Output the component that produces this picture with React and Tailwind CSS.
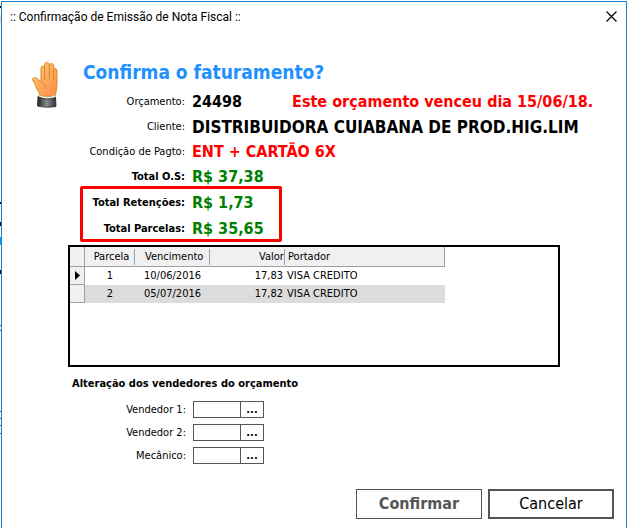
const orderRows = [
  { label: "Orçamento:", value: "24498", valueClass: "text-[16px] text-black", note: "Este orçamento venceu dia 15/06/18." },
  { label: "Cliente:", value: "DISTRIBUIDORA CUIABANA DE PROD.HIG.LIM", valueClass: "text-[17px] text-black" },
  { label: "Condição de Pagto:", value: "ENT + CARTÃO 6X", valueClass: "text-[16px] text-[#ff0000]" },
];

const retainedTotals = [
  { label: "Total Retenções:", value: "R$ 1,73" },
  { label: "Total Parcelas:", value: "R$ 35,65" },
];

const installments = [
  { number: 1, due: "10/06/2016", amount: "17,83", holder: "VISA CREDITO" },
  { number: 2, due: "05/07/2016", amount: "17,82", holder: "VISA CREDITO" },
];

const sellers = [
  { id: "vendedor1", label: "Vendedor 1:" },
  { id: "vendedor2", label: "Vendedor 2:" },
  { id: "mecanico", label: "Mecânico:" },
];

const HandIcon = () => (
  <svg viewBox="0 0 32 50" className="h-[50px] w-8" aria-hidden="true">
    <defs>
      <linearGradient id="skin" x1="0" y1="0" x2="1" y2="1">
        <stop offset="0" stopColor="#ffc777" />
        <stop offset="0.55" stopColor="#ffa95a" />
        <stop offset="1" stopColor="#ff8a4c" />
      </linearGradient>
      <linearGradient id="sleeve" x1="0" y1="0" x2="1" y2="0">
        <stop offset="0" stopColor="#222" />
        <stop offset="0.5" stopColor="#8a8a8a" />
        <stop offset="1" stopColor="#333" />
      </linearGradient>
    </defs>
    <path
      d="M10 36 C9.500 33 8.500 31 7 29 C5 26 5 22.500 2.500 20 C2.500 17.300 5 17.300 7 18.500 L11 22 L11 8.500 C11 5.500 14 5.500 14.300 8 L14.600 4.500 C15 1.500 19 1.500 19.200 4.500 L19.500 5.500 C20 2.600 23.600 3.200 23.700 6 L23.800 10 C24.300 7.500 27 8 27 11 L27 24 C27 29 25.500 32 25.500 36.500 Z"
      fill="url(#skin)"
      stroke="#d98a26"
      strokeWidth="1"
    />
    <path d="M14.500 8 V20 M19.300 5 V19 M23.700 9 V20" stroke="#d98a26" strokeWidth="1" fill="none" />
    <path d="M11 22 C14 23.500 15.500 26 15.500 29" stroke="#e8893c" strokeWidth="1" fill="none" />
    <path d="M8.500 34.500 C13 38 20 38 25 35 L25.500 39 C20 41 13 41 8 38 Z" fill="#f4f4f4" stroke="#bbb" strokeWidth="0.5" />
    <path d="M8 36.500 C13 39.500 20 39.500 25.500 37.500 L26 46.500 C20 47.500 13 47.500 7.500 46 Z" fill="url(#sleeve)" stroke="#222" strokeWidth="0.8" />
  </svg>
);

const Field = ({ label, value, labelClass = "", valueClass, height, children }) => (
  <div className={`flex items-center gap-[7px] ${height}`}>
    <dt className={`w-[183px] shrink-0 whitespace-nowrap text-right ${labelClass}`}>{label}</dt>
    <dd className={`whitespace-nowrap leading-5 font-bold ${valueClass}`}>
      {value}
      {children}
    </dd>
  </div>
);

const OrderSummary = () => (
  <dl className="mt-[5px]">
    {orderRows.map((row) => (
      <Field key={row.label} label={row.label} value={row.value} valueClass={row.valueClass} height="h-[25px]">
        {row.note && <span className="ml-[50px] text-[#ff0000]">{row.note}</span>}
      </Field>
    ))}
    <Field
      label="Total O.S:"
      value="R$ 37,38"
      labelClass="font-bold"
      valueClass="text-[16px] text-[#008000]"
      height="h-[26px]"
    />
    <div className="relative">
      {retainedTotals.map((row) => (
        <Field
          key={row.label}
          label={row.label}
          value={row.value}
          labelClass="font-bold"
          valueClass="text-[16px] text-[#008000]"
          height="h-[26px]"
        />
      ))}
      <div className="pointer-events-none absolute -top-1 bottom-0 left-[78px] w-[202px] rounded-xs border-3 border-[#ff0000]" />
    </div>
  </dl>
);

const InstallmentTable = () => (
  <div className="mx-[66px] mt-[3px] h-[122px] border-2 border-black">
    <table className="w-[375px] table-fixed border-separate border-spacing-0 text-left whitespace-nowrap">
      <colgroup>
        <col className="w-[15px]" />
        <col className="w-[50px]" />
        <col className="w-[75px]" />
        <col className="w-[75px]" />
        <col />
      </colgroup>
      <thead>
        <tr className="h-5 bg-[#f0f0f0] [&_span]:block [&_span]:h-4 [&_span]:overflow-hidden [&_span]:border-[#a0a0a0] [&>th]:border-b [&>th]:border-[#a0a0a0] [&>th]:p-0 [&>th]:font-normal">
          <th aria-label="Atual" className="border-r" />
          <th className="text-center">
            <span className="border-r pl-1">Parcela</span>
          </th>
          <th>
            <span className="border-r pl-[10px]">Vencimento</span>
          </th>
          <th>
            <span className="border-r pl-[49px]">Valor</span>
          </th>
          <th className="border-r">
            <span className="pl-[3px]">Portador</span>
          </th>
        </tr>
      </thead>
      <tbody>
        {installments.map((item, index) => (
          <tr key={item.number} className={`h-[18px] [&>td]:p-0 ${index % 2 ? "bg-[#dcdcdc]" : "bg-white"}`}>
            <td className="border-r border-b border-[#a0a0a0] bg-[#f0f0f0]">
              {index === 0 && (
                <svg viewBox="0 0 5 9" className="ml-[5px] h-[9px] w-[5px]" aria-hidden="true">
                  <path d="M0 0 L5 4.500 L0 9 Z" fill="#000" />
                </svg>
              )}
            </td>
            <td className="text-center">{item.number}</td>
            <td>
              <span className="pl-[9px]">{item.due}</span>
            </td>
            <td className="text-right">
              <span className="pr-0.5">{item.amount}</span>
            </td>
            <td>
              <span className="pl-0.5">{item.holder}</span>
            </td>
          </tr>
        ))}
      </tbody>
    </table>
  </div>
);

const SellerFields = () => (
  <section className="mt-[9px]">
    <h2 className="pl-[70px] leading-4 font-bold">Alteração dos vendedores do orçamento</h2>
    <div className="mt-[9px] flex flex-col gap-1.5">
      {sellers.map((seller) => (
        <div key={seller.id} className="flex h-[17px] items-center gap-[7px]">
          <label htmlFor={seller.id} className="w-[184px] text-right">
            {seller.label}
          </label>
          <div className="flex h-[17px]">
            <input id={seller.id} type="text" className="w-12 border border-[#555] bg-white px-1 outline-none" />
            <button
              type="button"
              aria-label={`Buscar ${seller.label}`}
              className="w-[23px] border border-l-0 border-[#555] bg-white leading-3 font-bold"
            >
              ...
            </button>
          </div>
        </div>
      ))}
    </div>
  </section>
);

// slivers of the window behind the dialog
const BackgroundEdge = () => (
  <svg className="w-px shrink-0" viewBox="0 0 1 528" preserveAspectRatio="xMinYMin slice" aria-hidden="true">
    <path d="M0.500 5 V7 M0.500 201 V203 M0.500 221 V225 M0.500 269 V273" stroke="#000" />
    <path d="M0.500 14 V22" stroke="#f3d3a8" />
    <path d="M0.500 236 V244" stroke="#00a8ff" />
    <path d="M0.500 324 V325 M0.500 329 V330 M0.500 410 V411 M0.500 417 V418 M0.500 424 V425 M0.500 432 V433" stroke="#555" />
  </svg>
);

export default function App() {
  return (
    <div className="flex min-h-screen bg-white pt-px font-['DejaVu_Sans_Condensed','DejaVu_Sans',sans-serif] text-[11px] leading-4 text-black">
      <BackgroundEdge />
      <main className="min-w-0 flex-1 border-x border-t border-[#1a80cc] bg-white">
        <header className="flex h-[29px] items-center justify-between pr-[9px] pl-2">
          <h1 className="font-[Roboto,sans-serif] text-[12px]">:: Confirmação de Emissão de Nota Fiscal ::</h1>
          <button type="button" aria-label="Fechar">
            <svg viewBox="0 0 11 11" className="size-[11px]" aria-hidden="true">
              <path d="M0.500 0.500 L10.500 10.500 M10.500 0.500 L0.500 10.500" stroke="#000" strokeWidth="1.2" />
            </svg>
          </button>
        </header>

        <div className="flex items-start pt-[29px] pl-7">
          <div className="-mb-10">
            <HandIcon />
          </div>
          <h2 className="pl-[21px] text-[19px] leading-6 font-bold text-[#1e90ff]">Confirma o faturamento?</h2>
        </div>

        <OrderSummary />
        <InstallmentTable />
        <SellerFields />

        <footer className="mt-[25px] flex justify-end gap-1.5 pr-3 text-[16px]">
          <button type="button" className="h-[30px] w-[126px] border border-[#555] bg-white font-bold text-[#555]">
            Confirmar
          </button>
          <button type="button" className="h-[30px] w-[126px] border-2 border-[#555] bg-white">
            Cancelar
          </button>
        </footer>
      </main>
    </div>
  );
}
